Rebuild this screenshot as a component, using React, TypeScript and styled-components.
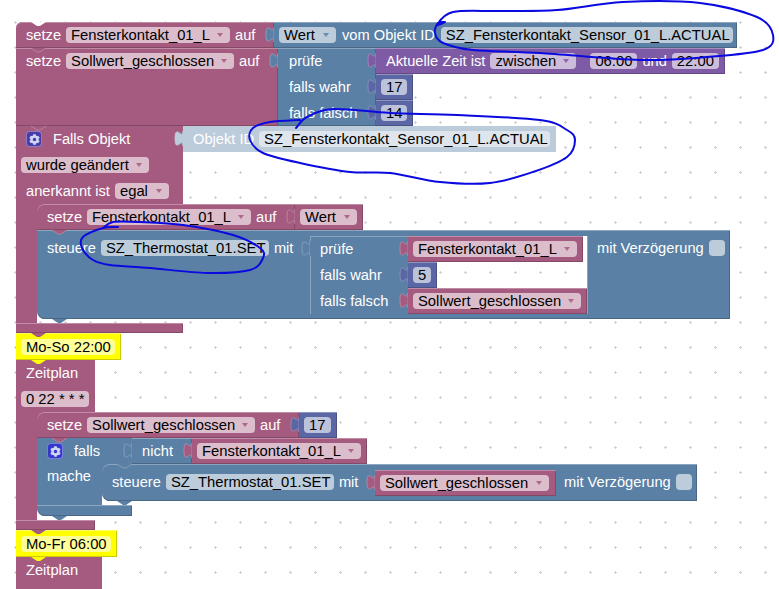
import React from "react";
import styled, { createGlobalStyle } from "styled-components";
import { FaCog } from "react-icons/fa";

type Tone = "var" | "blue" | "purple" | "num" | "note" | "shadow";

const tones: Record<Tone, { bg: string; light: string; dark: string; field: string; arrow: string }> = {
  var: { bg: "#a55b80", light: "#c08ca6", dark: "#844966", field: "#dbbdcc", arrow: "#a55b80" },
  blue: { bg: "#5b80a5", light: "#8ca6c0", dark: "#496684", field: "#bdccdb", arrow: "#5b80a5" },
  purple: { bg: "#805ba5", light: "#a68cc0", dark: "#664984", field: "#ccbddb", arrow: "#805ba5" },
  num: { bg: "#5b67a5", light: "#8c95c0", dark: "#495284", field: "#bdc2db", arrow: "#5b67a5" },
  note: { bg: "#ffff00", light: "#ffff66", dark: "#cccc00", field: "#ffff99", arrow: "#cccc00" },
  shadow: { bg: "#bdccdb", light: "#bdccdb", dark: "#bdccdb", field: "#dee5ed", arrow: "#5b80a5" },
};

const dots = `url("data:image/svg+xml,%3Csvg xmlns='http://www.w3.org/2000/svg' width='25' height='25'%3E%3Cpath d='M15 21h1v3h-1z' fill='%23d2d2d2'/%3E%3Cpath d='M14 22h3v1h-3z' fill='%23d2d2d2'/%3E%3C/svg%3E")`;

const Global = createGlobalStyle`
  html, body { margin: 0; padding: 0; background: #fff; }
  #root { width: 779px; height: 589px; }
`;

const Workspace = styled.div`
  position: relative;
  display: flex;
  flex-direction: column;
  align-items: flex-start;
  box-sizing: border-box;
  width: 779px;
  height: 589px;
  padding: 22px 0 0 16px;
  overflow: hidden;
  background: #fff ${dots} 0 0 repeat fixed;
  font-family: "Liberation Sans", Arial, sans-serif;
  font-size: 14.67px;
`;

/* one line of a block stack: a statement and the values plugged into it */
const Stmt = styled.div<{ $under?: Tone }>`
  display: flex;
  align-items: flex-start;
  flex: none;
  ${(p) => (p.$under ? `background: linear-gradient(${tones[p.$under].bg} 50%, transparent 50%);` : "")}
`;

const Col = styled.div<{ $pb?: number }>`
  display: flex;
  flex-direction: column;
  align-items: flex-start;
  flex: none;
  padding-bottom: ${(p) => p.$pb ?? 0}px;
`;

/* spine + contents of a C-shaped block */
const Body = styled.div`
  display: flex;
  align-items: stretch;
  flex: none;
`;

const Spine = styled.div<{ $w: number; $tone: Tone }>`
  flex: none;
  width: ${(p) => p.$w}px;
  background: ${(p) => tones[p.$tone].bg};
`;

const Part = styled.div<{
  $w: number; $h: number; $tone: Tone;
  $tl?: number; $bl?: number; $flat?: boolean; $across?: boolean;
}>`
  position: relative;
  flex: none;
  box-sizing: border-box;
  width: ${(p) => p.$w}px;
  height: ${(p) => p.$h}px;
  background: ${(p) => tones[p.$tone].bg};
  border-top-left-radius: ${(p) => p.$tl ?? 0}px;
  border-bottom-left-radius: ${(p) => p.$bl ?? 0}px;
  ${(p) => (p.$across ? "display: flex; align-items: flex-start;" : "")}
  ${(p) =>
    p.$flat
      ? ""
      : `box-shadow: inset 0 1px 0 ${tones[p.$tone].light}, inset -1px 0 0 ${tones[p.$tone].dark}, inset 0 -1px 0 ${tones[p.$tone].dark};`}
`;

const Row = styled.div<{ $pad?: number; $h?: number; $gap?: number; $w?: number }>`
  display: flex;
  align-items: center;
  flex: none;
  box-sizing: border-box;
  height: ${(p) => p.$h ?? 26}px;
  padding-left: ${(p) => p.$pad ?? 10}px;
  gap: ${(p) => p.$gap ?? 5}px;
  ${(p) => (p.$w ? `width: ${p.$w}px;` : "")}
`;

const Label = styled.span`
  color: #fff;
  line-height: 16px;
  white-space: nowrap;
`;

const Box = styled.span<{ $w: number; $tone: Tone; $ml?: number }>`
  display: flex;
  align-items: center;
  flex: none;
  box-sizing: border-box;
  width: ${(p) => p.$w}px;
  height: 16px;
  padding: 0 7px 0 5px;
  margin-left: ${(p) => p.$ml ?? 0}px;
  border-radius: 4px;
  color: #000;
  font-size: 14.8px;
  line-height: 16px;
  white-space: nowrap;
  background: ${(p) => tones[p.$tone].field};
`;

const Arrow = styled.i<{ $tone: Tone }>`
  display: block;
  flex: none;
  margin-left: auto;
  width: 0;
  height: 0;
  border-left: 3px solid transparent;
  border-right: 3px solid transparent;
  border-top: 4px solid ${(p) => tones[p.$tone].arrow};
  opacity: 0.85;
`;

const Field = ({ w, tone, children, menu, ml }: { w: number; tone: Tone; children: React.ReactNode; menu?: boolean; ml?: number }) => (
  <Box $w={w} $tone={tone} $ml={ml}>
    {children}
    {menu && <Arrow $tone={tone} />}
  </Box>
);

const TabSvg = styled.svg<{ $tone: Tone }>`
  position: absolute;
  left: -8px;
  top: 5px;
  width: 9px;
  height: 16px;
  overflow: visible;
  z-index: 2;
  fill: ${(p) => tones[p.$tone].bg};
  stroke: ${(p) => tones[p.$tone].light};
  stroke-width: 0.8;
`;

const Tab = ({ tone }: { tone: Tone }) => (
  <TabSvg $tone={tone} viewBox="0 0 9 16">
    <path d="M8 0c0 10-8-8-8 7.5s8-2.5 8 7.5z" />
    <path d="M8 0v15h1V0z" stroke="none" />
  </TabSvg>
);

const NotchSvg = styled.svg<{ $top?: boolean }>`
  position: absolute;
  left: 15px;
  ${(p) => (p.$top ? "top: 0;" : "top: 100%;")}
  width: 15px;
  height: 4px;
  overflow: visible;
  z-index: 3;
`;

const Notch = ({ color, edge, top }: { color: string; edge?: string; top?: boolean }) => (
  <NotchSvg $top={top} viewBox="0 0 15 4">
    <path d="M0 0l6 4h3l6-4z" fill={color} />
    {edge && <path d="M0 0l6 4h3l6-4" fill="none" stroke={edge} strokeWidth="0.8" />}
  </NotchSvg>
);

const Gear = styled.span<{ $bg: string }>`
  display: flex;
  align-items: center;
  justify-content: center;
  flex: none;
  box-sizing: border-box;
  width: 16px;
  height: 16px;
  border-radius: 4px;
  border: 1px solid rgba(255, 255, 255, 0.35);
  color: #cfd6f5;
  font-size: 11px;
  background: ${(p) => p.$bg};
`;

const Check = styled.span`
  flex: none;
  width: 16px;
  height: 16px;
  border-radius: 4px;
  background: #bdccdb;
`;

/* the inline value sockets sit 6px below the block's top edge */
const Socket = styled.div`
  display: flex;
  align-items: flex-start;
  flex: none;
  margin-top: 6px;
`;

const TestBlock = styled.div`
  position: relative;
  flex: none;
  width: 98px;
  height: 78px;
  box-sizing: border-box;
  background: ${tones.blue.bg};
  box-shadow: inset 1px 1px 0 ${tones.blue.light};
`;

const Hole = styled.div`
  flex: none;
  width: 180px;
  height: 78px;
  box-sizing: border-box;
  border-right: 1px solid ${tones.blue.light};
  border-bottom: 1px solid ${tones.blue.light};
  background: #fff ${dots} 0 0 repeat fixed;
`;

const Scribble = styled.svg`
  position: absolute;
  left: 0;
  top: 0;
  width: 779px;
  height: 589px;
  z-index: 6;
  pointer-events: none;
  fill: none;
  stroke: #0a0ae0;
  stroke-width: 2;
  stroke-linecap: round;
  stroke-linejoin: round;
`;

const smooth = (pts: number[][]) => {
  let d = `M${pts[0][0]} ${pts[0][1]}`;
  for (let i = 0; i < pts.length - 1; i++) {
    const p0 = pts[Math.max(i - 1, 0)];
    const p1 = pts[i];
    const p2 = pts[i + 1];
    const p3 = pts[Math.min(i + 2, pts.length - 1)];
    d += `C${p1[0] + (p2[0] - p0[0]) / 6} ${p1[1] + (p2[1] - p0[1]) / 6} ${p2[0] - (p3[0] - p1[0]) / 6} ${p2[1] - (p3[1] - p1[1]) / 6} ${p2[0]} ${p2[1]}`;
  }
  return d;
};

const ring1 = [[445,22],[437,25],[453,12],[500,11],[557,10],[623,2],[700,3],[757,17],[773,35],[763,50],[707,57],[640,60],[540,53],[473,50],[443,43],[435,33],[438,23],[445,22]];
const ring2 = [[296,128],[307,117],[333,109],[390,113],[457,115],[540,120],[567,130],[575,140],[567,157],[533,172],[490,183],[440,182],[390,173],[350,172],[300,163],[263,153],[250,140],[253,128],[270,122],[300,120]];
const ring3 = [[118,227],[103,228],[83,237],[82,248],[93,260],[110,265],[150,268],[207,273],[250,270],[263,258],[260,248],[233,235],[183,225],[140,222],[113,222],[103,228]];

const VarNotch = () => <Notch color={tones.var.bg} edge={tones.var.light} />;

export default function App() {
  return (
    <Workspace>
      <Global />

      <Stmt>
        <Part $w={258} $h={26} $tone="var" $tl={6}>
          <Notch top color="#fff" />
          <VarNotch />
          <Row>
            <Label>setze</Label>
            <Field w={164} tone="var" menu>Fensterkontakt_01_L</Field>
            <Label>auf</Label>
          </Row>
        </Part>
        <Part $w={463} $h={26} $tone="blue">
          <Tab tone="blue" />
          <Row $pad={5} $gap={6}>
            <Field w={57} tone="blue" menu>Wert</Field>
            <Label>vom Objekt ID</Label>
            <Field w={292} tone="blue">SZ_Fensterkontakt_Sensor_01_L.ACTUAL</Field>
          </Row>
        </Part>
      </Stmt>

      <Stmt>
        <Part $w={262} $h={78} $tone="var">
          <VarNotch />
          <Row>
            <Label>setze</Label>
            <Field w={168} tone="var" menu>Sollwert_geschlossen</Field>
            <Label>auf</Label>
          </Row>
        </Part>
        <Part $w={98} $h={78} $tone="blue">
          <Tab tone="blue" />
          <Row $pad={11}><Label>prüfe</Label></Row>
          <Row $pad={11}><Label>falls wahr</Label></Row>
          <Row $pad={11}><Label>falls falsch</Label></Row>
        </Part>
        <Col>
          <Part $w={349} $h={26} $tone="purple">
            <Tab tone="purple" />
            <Row>
              <Label>Aktuelle Zeit ist</Label>
              <Field w={86} tone="purple" menu>zwischen</Field>
              <Field w={47} tone="purple" ml={9}>06:00</Field>
              <Label>und</Label>
              <Field w={47} tone="purple">22:00</Field>
            </Row>
          </Part>
          <Part $w={37} $h={26} $tone="num">
            <Tab tone="num" />
            <Row $pad={5}><Field w={26} tone="num">17</Field></Row>
          </Part>
          <Part $w={37} $h={26} $tone="num">
            <Tab tone="num" />
            <Row $pad={5}><Field w={26} tone="num">14</Field></Row>
          </Part>
        </Col>
      </Stmt>

      {/* Falls Objekt */}
      <Stmt>
        <Part $w={167} $h={78} $tone="var" $flat>
          <Row $gap={11}>
            <Gear $bg="#4a3aa8"><FaCog /></Gear>
            <Label>Falls Objekt</Label>
          </Row>
          <Row $pad={5}><Field w={128} tone="var" menu>wurde geändert</Field></Row>
          <Row>
            <Label>anerkannt ist</Label>
            <Field w={54} tone="var" menu>egal</Field>
          </Row>
        </Part>
        <Part $w={373} $h={26} $tone="shadow" $flat>
          <Tab tone="shadow" />
          <Row $gap={5}>
            <Label>Objekt ID</Label>
            <Field w={291} tone="shadow">SZ_Fensterkontakt_Sensor_01_L.ACTUAL</Field>
          </Row>
        </Part>
      </Stmt>
      <Body>
        <Spine $w={21} $tone="var" />
        <Col $pb={4}>
          <Stmt $under="var">
            <Part $w={258} $h={26} $tone="var" $tl={8}>
              <VarNotch />
              <Row>
                <Label>setze</Label>
                <Field w={164} tone="var" menu>Fensterkontakt_01_L</Field>
                <Label>auf</Label>
              </Row>
            </Part>
            <Part $w={68} $h={26} $tone="var">
              <Tab tone="var" />
              <Row $pad={5}><Field w={57} tone="var" menu>Wert</Field></Row>
            </Part>
          </Stmt>
          <Part $w={693} $h={89} $tone="blue" $bl={8} $across>
            <Notch color={tones.blue.bg} />
            <Row $h={36} $w={273}>
              <Label>steuere</Label>
              <Field w={168} tone="blue">SZ_Thermostat_01.SET</Field>
              <Label>mit</Label>
            </Row>
            <Socket>
              <TestBlock>
                <Tab tone="blue" />
                <Row><Label>prüfe</Label></Row>
                <Row><Label>falls wahr</Label></Row>
                <Row><Label>falls falsch</Label></Row>
              </TestBlock>
              <Hole>
                <Col>
                  <Part $w={175} $h={26} $tone="var">
                    <Tab tone="var" />
                    <Row $pad={5}><Field w={164} tone="var" menu>Fensterkontakt_01_L</Field></Row>
                  </Part>
                  <Part $w={29} $h={26} $tone="num">
                    <Tab tone="num" />
                    <Row $pad={5}><Field w={18} tone="num">5</Field></Row>
                  </Part>
                  <Part $w={179} $h={26} $tone="var">
                    <Tab tone="var" />
                    <Row $pad={5}><Field w={168} tone="var" menu>Sollwert_geschlossen</Field></Row>
                  </Part>
                </Col>
              </Hole>
            </Socket>
            <Row $h={36} $pad={9}>
              <Label>mit Verzögerung</Label>
              <Check />
            </Row>
          </Part>
        </Col>
      </Body>
      <Part $w={167} $h={10} $tone="var">
        <Notch color={tones.var.bg} />
      </Part>

      {/* Mo-So */}
      <Part $w={105} $h={27} $tone="note">
        <Notch color="#ffff00" />
        <Row $pad={5} $h={27}><Field w={94} tone="note">Mo-So 22:00</Field></Row>
      </Part>

      {/* Zeitplan */}
      <Part $w={79} $h={52} $tone="var" $flat>
        <Row><Label>Zeitplan</Label></Row>
        <Row $pad={5}><Field w={68} tone="var">0 22 * * *</Field></Row>
      </Part>
      <Body>
        <Spine $w={21} $tone="var" />
        <Col $pb={4}>
          <Stmt $under="var">
            <Part $w={262} $h={26} $tone="var" $tl={8}>
              <VarNotch />
              <Row>
                <Label>setze</Label>
                <Field w={168} tone="var" menu>Sollwert_geschlossen</Field>
                <Label>auf</Label>
              </Row>
            </Part>
            <Part $w={38} $h={26} $tone="num">
              <Tab tone="num" />
              <Row $pad={5}><Field w={27} tone="num">17</Field></Row>
            </Part>
          </Stmt>

          {/* falls */}
          <Stmt>
            <Part $w={95} $h={26} $tone="blue" $flat>
              <Row $gap={11}>
                <Gear $bg="#3338cc"><FaCog /></Gear>
                <Label>falls</Label>
              </Row>
            </Part>
            <Part $w={60} $h={26} $tone="blue">
              <Tab tone="blue" />
              <Row><Label>nicht</Label></Row>
            </Part>
            <Part $w={175} $h={26} $tone="var">
              <Tab tone="var" />
              <Row $pad={5}><Field w={164} tone="var" menu>Fensterkontakt_01_L</Field></Row>
            </Part>
          </Stmt>
          <Body>
            <Spine $w={65} $tone="blue">
              <Row $h={24}><Label>mache</Label></Row>
            </Spine>
            <Col $pb={4}>
              <Stmt $under="blue">
                <Part $w={595} $h={37} $tone="blue" $tl={8} $bl={8} $across>
                  <Notch top color={tones.blue.bg} edge={tones.blue.light} />
                  <Notch color={tones.blue.bg} />
                  <Row $h={36} $w={273}>
                    <Label>steuere</Label>
                    <Field w={168} tone="blue">SZ_Thermostat_01.SET</Field>
                    <Label>mit</Label>
                  </Row>
                  <Socket>
                    <Part $w={181} $h={26} $tone="var">
                      <Tab tone="var" />
                      <Row $pad={5}><Field w={169} tone="var" menu>Sollwert_geschlossen</Field></Row>
                    </Part>
                  </Socket>
                  <Row $h={36} $pad={8}>
                    <Label>mit Verzögerung</Label>
                    <Check />
                  </Row>
                </Part>
              </Stmt>
            </Col>
          </Body>
          <Part $w={95} $h={11} $tone="blue" $bl={8}>
            <Notch color={tones.blue.bg} />
          </Part>
        </Col>
      </Body>
      <Part $w={79} $h={10} $tone="var">
        <Notch color={tones.var.bg} />
      </Part>

      {/* Mo-Fr */}
      <Part $w={101} $h={27} $tone="note">
        <Notch color="#ffff00" />
        <Row $pad={5} $h={28}><Field w={90} tone="note">Mo-Fr 06:00</Field></Row>
      </Part>
      <Part $w={86} $h={40} $tone="var" $flat>
        <Row><Label>Zeitplan</Label></Row>
      </Part>

      <Scribble viewBox="0 0 779 589">
        <path d={smooth(ring1)} />
        <path d={smooth(ring2)} />
        <path d={smooth(ring3)} />
      </Scribble>
    </Workspace>
  );
}
